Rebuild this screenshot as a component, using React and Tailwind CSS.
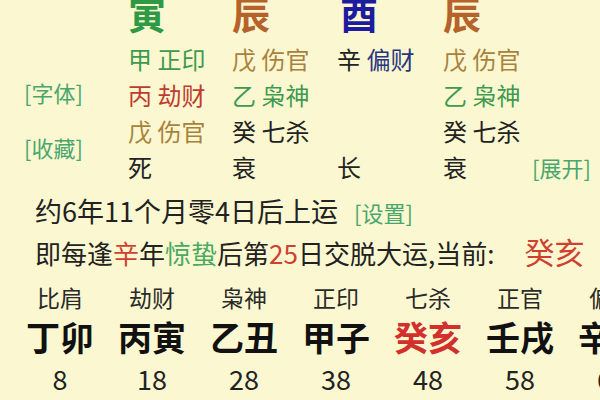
import React from "react";

const G = "text-[#3f9a4f]";
const BR = "text-[#a8823c]";
const RD = "text-[#bf3b2e]";
const DK = "text-[#222222]";

function Cell({ children, className = "" }) {
  return (
    <div className={"whitespace-nowrap text-[24px] leading-[36px] " + className}>
      {children}
    </div>
  );
}

export default function App() {
  const bottom = [
    ["比肩", "丁卯", "8", false],
    ["劫财", "丙寅", "18", false],
    ["枭神", "乙丑", "28", false],
    ["正印", "甲子", "38", false],
    ["七杀", "癸亥", "48", true],
    ["正官", "壬戌", "58", false],
    ["偏印", "辛酉", "68", false],
  ];
  return (
    <div className="w-[600px] h-[400px] overflow-hidden bg-[#fbf8d1] font-['Noto_Sans_CJK_SC','Noto_Sans',sans-serif] text-[#222]">
      {/* top section */}
      <div className="flex h-[185px]">
        <div className="w-[128px] shrink-0 flex flex-col pl-[24px] pt-[78px] gap-[27px] text-[22px] leading-[28px] text-[#4aa66c]">
          <div>[字体]</div>
          <div>[收藏]</div>
        </div>
        <div className="grid grid-cols-[104px_105px_106px_89px_1fr] grid-rows-[47px_36px_36px_36px_36px] mt-[-6px] flex-1">
          <div className="text-[38px] leading-[38px] font-bold text-[#2f9a45]">寅</div>
          <div className="text-[38px] leading-[38px] font-bold text-[#b5632b]">辰</div>
          <div className="text-[38px] leading-[38px] font-bold text-[#1c1ca0] pl-[3px]">酉</div>
          <div className="text-[38px] leading-[38px] font-bold text-[#b5632b]">辰</div>
          <div></div>

          <Cell className={G}>甲 正印</Cell>
          <Cell className={BR}>戊 伤官</Cell>
          <Cell>
            <span className="text-[#222]">辛</span> <span className="text-[#2a3580]">偏财</span>
          </Cell>
          <Cell className={BR}>戊 伤官</Cell>
          <div></div>

          <Cell className={RD}>丙 劫财</Cell>
          <Cell className={G}>乙 枭神</Cell>
          <div></div>
          <Cell className={G}>乙 枭神</Cell>
          <div></div>

          <Cell className={BR}>戊 伤官</Cell>
          <Cell className={DK}>癸 七杀</Cell>
          <div></div>
          <Cell className={DK}>癸 七杀</Cell>
          <div></div>

          <Cell className={DK}>死</Cell>
          <Cell className={DK}>衰</Cell>
          <Cell className={DK}>长</Cell>
          <Cell className={DK}>衰</Cell>
          <div className="whitespace-nowrap text-[22px] leading-[36px] text-[#4aa66c]">[展开]</div>
        </div>
      </div>

      {/* row 6 */}
      <div className="mt-[8px] h-[36px] pl-[35px] flex items-baseline whitespace-nowrap">
        <span className="text-[27px] leading-[36px]">约6年11个月零4日后上运</span>
        <span className="ml-[16px] text-[22px] leading-[36px] text-[#4aa66c]">[设置]</span>
      </div>

      {/* row 7 */}
      <div className="mt-[4px] h-[36px] pl-[35px] flex items-baseline whitespace-nowrap text-[26px] leading-[36px]">
        <span>即每逢</span>
        <span className="text-[#d0402f]">辛</span>
        <span>年</span>
        <span className="text-[#4aaa62]">惊蛰</span>
        <span>后第</span>
        <span className="text-[#d0402f]">25</span>
        <span>日交脱大运,当前:</span>
        <span className="ml-[30px] text-[30px] text-[#d0402f]">癸亥</span>
      </div>

      {/* bottom grid */}
      <div className="mt-[13px] pl-[14px] grid grid-cols-[repeat(7,92px)] whitespace-nowrap text-center">
        {bottom.map(([a]) => (
          <div key={a} className="text-[23px] leading-[30px] text-[#2a2a2a]">{a}</div>
        ))}
        {bottom.map(([a, b, c, red]) => (
          <div
            key={b}
            className={
              "mt-[5px] text-[34px] leading-[40px] font-bold " +
              (red ? "text-[#d2302c]" : "text-[#111]")
            }
          >
            {b}
          </div>
        ))}
        {bottom.map(([a, b, c]) => (
          <div key={c} className="mt-[7px] text-[27px] leading-[30px] text-[#222]">{c}</div>
        ))}
      </div>
    </div>
  );
}
